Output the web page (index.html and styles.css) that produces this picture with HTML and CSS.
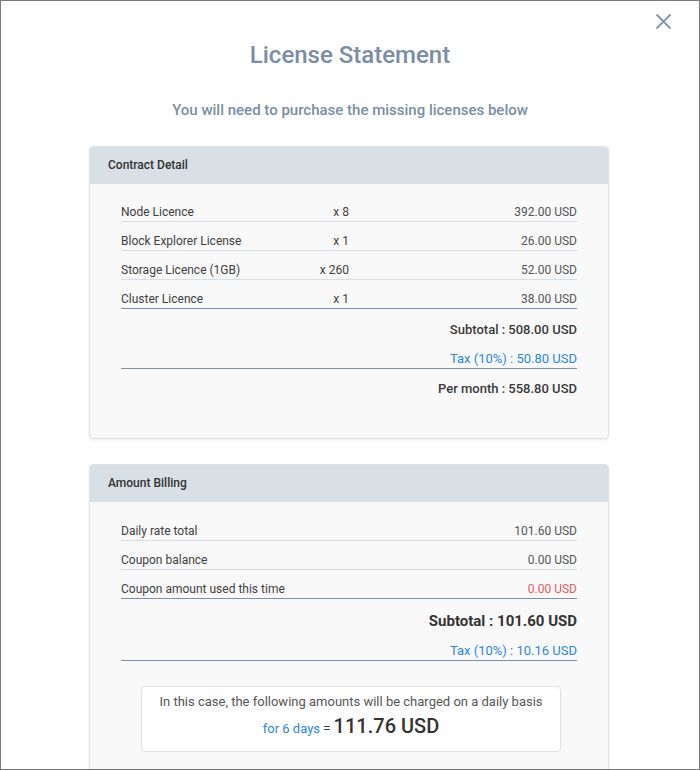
FILE: index.html
```html
<!DOCTYPE html>
<html>
<head>
<meta charset="utf-8">
<link rel="stylesheet" href="styles.css">
</head>
<body>
<div class="modal">
  <button class="close" aria-label="Close">
    <svg width="17" height="17" viewBox="0 0 17 17"><path d="M1.5 1.5 L15.5 15.5 M15.5 1.5 L1.5 15.5" stroke="#8497ad" stroke-width="1.8" fill="none"/></svg>
  </button>
  <h1 class="title">License Statement</h1>
  <p class="subtitle">You will need to purchase the missing licenses below</p>

  <section class="card">
    <div class="card-head">Contract Detail</div>
    <div class="card-body">
      <div class="item"><span class="name">Node Licence</span><span class="qty">x 8</span><span class="amt">392.00 USD</span></div>
      <div class="item"><span class="name">Block Explorer License</span><span class="qty">x 1</span><span class="amt">26.00 USD</span></div>
      <div class="item"><span class="name">Storage Licence (1GB)</span><span class="qty">x 260</span><span class="amt">52.00 USD</span></div>
      <div class="item last"><span class="name">Cluster Licence</span><span class="qty">x 1</span><span class="amt">38.00 USD</span></div>
      <div class="sum">Subtotal : 508.00 USD</div>
      <div class="tax">Tax (10%) : 50.80 USD</div>
      <div class="sum month">Per month : 558.80 USD</div>
    </div>
  </section>

  <section class="card card2">
    <div class="card-head">Amount Billing</div>
    <div class="card-body">
      <div class="item"><span class="name">Daily rate total</span><span class="amt">101.60 USD</span></div>
      <div class="item"><span class="name">Coupon balance</span><span class="amt">0.00 USD</span></div>
      <div class="item last"><span class="name">Coupon amount used this time</span><span class="amt red">0.00 USD</span></div>
      <div class="sum big">Subtotal : 101.60 USD</div>
      <div class="tax">Tax (10%) : 10.16 USD</div>
      <div class="notice">
        <div class="notice-text">In this case, the following amounts will be charged on a daily basis</div>
        <div class="notice-total"><span class="days">for 6 days</span> = <span class="total">111.76 USD</span></div>
      </div>
    </div>
  </section>
</div>
</body>
</html>
```
FILE: styles.css
```css
* { box-sizing: border-box; }
html, body { margin: 0; padding: 0; }
body {
  font-family: Roboto, "Liberation Sans", Arial, sans-serif;
  background: #ffffff;
}
.modal {
  position: relative;
  width: 700px;
  height: 770px;
  border: 1px solid #7a7a7a;
  background: #ffffff;
  overflow: hidden;
  display: flex;
  flex-direction: column;
  align-items: center;
}
.close {
  position: absolute;
  top: 11px;
  right: 26px;
  width: 19px;
  height: 19px;
  padding: 1px;
  border: 0;
  background: none;
  display: flex;
}
.title {
  margin: 40px 0 0;
  font-size: 24px;
  line-height: 28px;
  font-weight: 500;
  color: #7b8ea5;
}
.subtitle {
  margin: 31px 0 0;
  font-size: 15px;
  line-height: 20px;
  font-weight: 500;
  color: #7b8ea5;
}
.card {
  width: 520px;
  margin: 26px 0 0 -2px;
  border: 1px solid #dfe3e8;
  border-radius: 4px;
  background: #f9f9f9;
  box-shadow: 0 1px 3px rgba(0, 0, 0, 0.08);
  flex-shrink: 0;
}
.card2 { margin-top: 25px; }
.card-head {
  height: 37px;
  padding: 0 18px 1px;
  display: flex;
  align-items: center;
  background: #d8dfe5;
  border-radius: 3px 3px 0 0;
  font-size: 12px;
  font-weight: 500;
  color: #333;
}
.card-body {
  padding: 9px 31px 39px 31px;
}
.card2 .card-body { padding-top: 10px; padding-bottom: 20px; }
.item {
  display: flex;
  align-items: center;
  padding-top: 10px;
  height: 29px;
  line-height: 18px;
  font-size: 12px;
  color: #3e3e3e;
  border-bottom: 1px solid #d6dee6;
}
.item.last { border-bottom-color: #7d90a6; }
.name { flex: 1; }
.qty { width: 60px; text-align: right; }
.card:not(.card2) .name { flex: 0 0 168px; }
.card:not(.card2) .amt { flex: 1; }
.amt { text-align: right; color: #555; }
.amt.red { color: #ee5a5a; }
.sum {
  padding-top: 11px;
  line-height: 20px;
  font-size: 13px;
  font-weight: 500;
  color: #3a3a3a;
  text-align: right;
}
.sum.month { padding-top: 10px; }
.sum.big {
  padding-top: 10px;
  line-height: 24px;
  font-size: 15px;
  font-weight: 700;
  color: #333;
}
.tax {
  padding-top: 9px;
  line-height: 19px;
  height: 29px;
  font-size: 13px;
  color: #2f86d6;
  text-align: right;
  border-bottom: 1px solid #7d90a6;
}
.card2 .tax { padding-top: 8px; height: 28px; }
.notice {
  width: 420px;
  margin: 25px 0 0 20px;
  padding: 5px 0 8px;
  background: #ffffff;
  border: 1px solid #dbe2e9;
  border-radius: 4px;
  text-align: center;
}
.notice-text {
  line-height: 20px;
  font-size: 13px;
  color: #555;
}
.notice-total {
  line-height: 28px;
  font-size: 13px;
  color: #333;
}
.days { color: #2f86d6; }
.total { font-size: 20px; font-weight: 500; color: #333; }
```
